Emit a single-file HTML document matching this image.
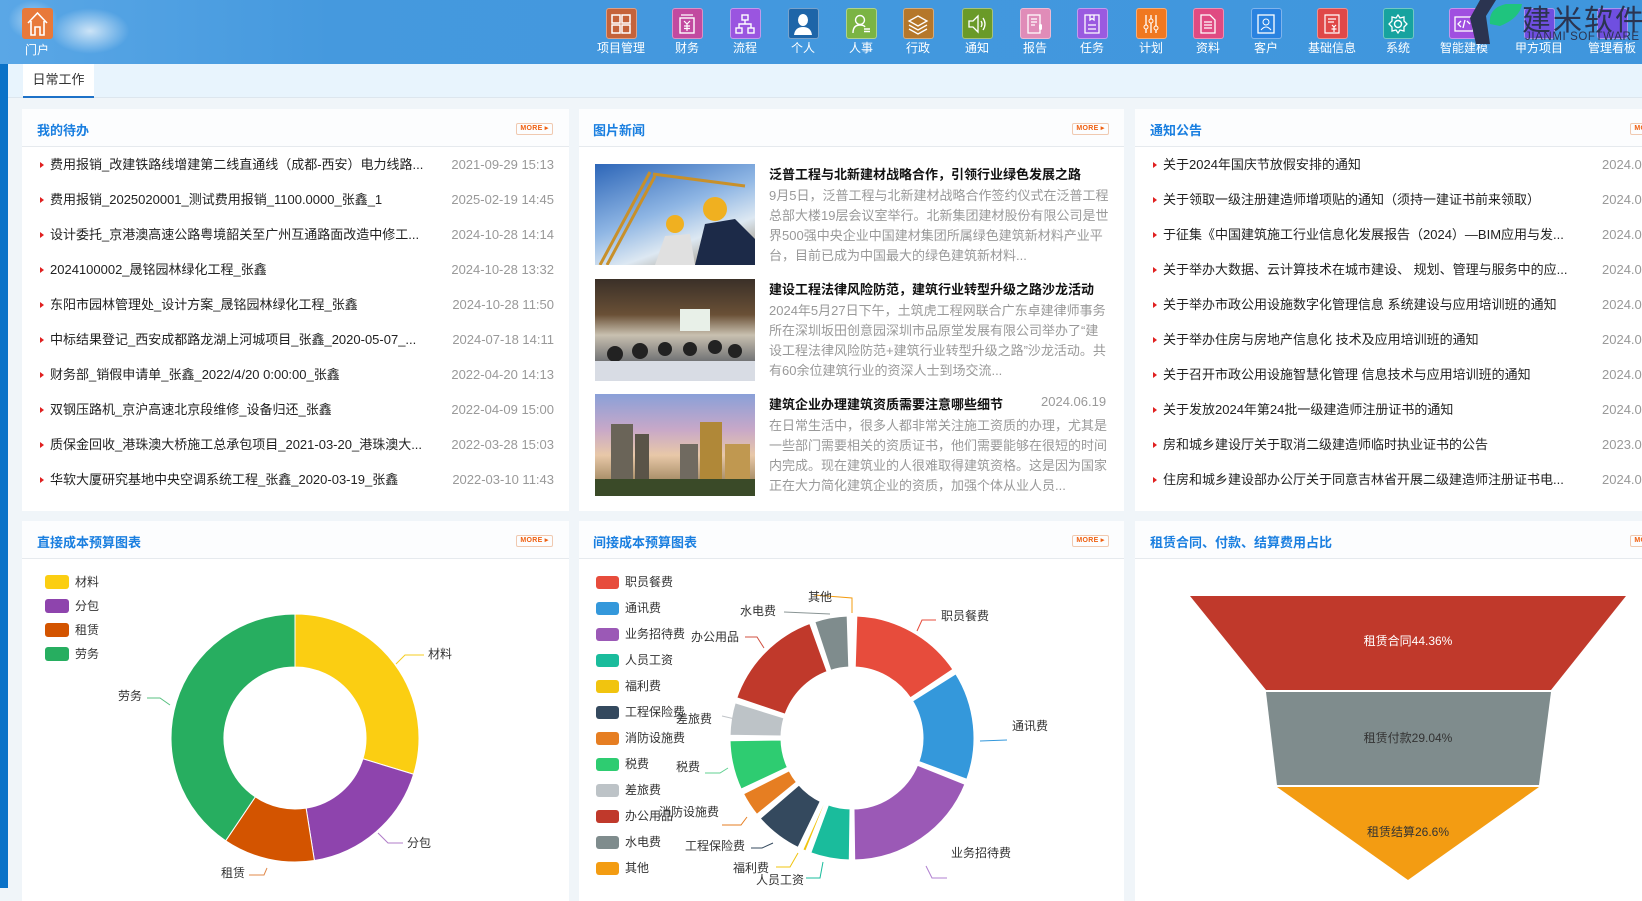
<!DOCTYPE html>
<html><head><meta charset="utf-8">
<style>
*{margin:0;padding:0;box-sizing:border-box}
body{width:1642px;height:888px;overflow:hidden;background:#f0f5f9;font-family:"Liberation Sans","Noto Sans CJK SC",sans-serif;position:relative;font-size:13px;color:#222}
.abs{position:absolute}
.top{left:0;top:0;width:1642px;height:64px;background:linear-gradient(90deg,#5aa7e6 0%,#4599de 20%,#3f96dd 100%)}
.nav{position:absolute;top:8px;width:60px;margin-left:-30px;text-align:center;color:#fff;font-size:12px}
.nav .ic{width:31px;height:31px;margin:0 auto;border-radius:3px;border:1px solid rgba(255,255,255,.4);display:flex;align-items:center;justify-content:center}
.nav .lb{margin-top:2px;line-height:14px;white-space:nowrap}
.panel{position:absolute;background:#fff}
.ph{position:absolute;left:0;right:0;top:0;height:38px;border-bottom:1px solid #e6eaee;background:#fcfdfe}
.pt{position:absolute;left:15px;top:11px;font-size:13px;font-weight:bold;color:#1a7fe0}
.more{position:absolute;top:14px;width:37px;height:12px;border:1px solid #f0c9b0;border-radius:2px;font-size:7px;font-weight:bold;color:#f06010;text-align:center;line-height:10px;letter-spacing:.3px}
.row{position:absolute;left:0;right:0;height:20px;line-height:20px;font-size:13px;white-space:nowrap}
.row .ar{position:absolute;left:18px;top:7px;width:0;height:0;border-left:4px solid #e02020;border-top:3px solid transparent;border-bottom:3px solid transparent}
.row .tx{position:absolute;left:28px;color:#222}
.row .dt{position:absolute;color:#999}
.ntitle{position:absolute;font-weight:bold;font-size:13px;color:#111;white-space:nowrap}
.nbody{position:absolute;font-size:13px;line-height:20px;color:#999;width:342px;height:80px;overflow:hidden}
.lg{position:absolute;font-size:12px;color:#333;white-space:nowrap;line-height:14px}
.sw{position:absolute;border-radius:3px}
.lab{position:absolute;font-size:12px;color:#333;white-space:nowrap;line-height:14px}
</style></head><body>

<div class="abs top"></div>
<div class="abs" style="left:50px;top:8px;width:80px;height:46px;border-radius:50%;background:radial-gradient(ellipse at center,rgba(255,255,255,.7),rgba(255,255,255,0) 70%)"></div>
<div class="abs" style="left:8px;top:0px;width:50px;height:40px;border-radius:50%;background:radial-gradient(ellipse at center,rgba(255,255,255,.5),rgba(255,255,255,0) 70%)"></div>
<div class="abs" style="left:22px;top:8px;width:31px;height:31px;background:#e8793a;border-radius:3px"></div>
<svg class="abs" style="left:22px;top:8px" width="31" height="31"><path d="M6 15 L15.5 5 L25 15 M9 13 V27 H13 V19 H18 V27 H22 V13" fill="none" stroke="#fff" stroke-width="1.6"/></svg>
<div class="abs" style="left:25px;top:41px;color:#fff;font-size:12px">门户</div>

<div class="nav" style="left:621px"><div class="ic" style="background:#c5633a"><svg width="22" height="22"><rect x="2" y="2" width="8" height="8" fill="none" stroke="#fff" stroke-width="1.5"/><rect x="12" y="2" width="8" height="8" fill="none" stroke="#fff" stroke-width="1.5"/><rect x="2" y="12" width="8" height="8" fill="none" stroke="#fff" stroke-width="1.5"/><rect x="12" y="12" width="8" height="8" fill="none" stroke="#fff" stroke-width="1.5"/></svg></div><div class="lb">项目管理</div></div>
<div class="nav" style="left:687px"><div class="ic" style="background:#c24aa0"><svg width="22" height="22"><rect x="4" y="5" width="14" height="15" fill="none" stroke="#fff" stroke-width="1.4"/><path d="M5 2H17 M8 8 L11 11 L14 8 M11 11V18 M8 13H14 M8 15.5H14" stroke="#fff" fill="none" stroke-width="1.2"/></svg></div><div class="lb">财务</div></div>
<div class="nav" style="left:745px"><div class="ic" style="background:#9a55e0"><svg width="22" height="22"><rect x="8" y="2" width="6" height="5" fill="none" stroke="#fff" stroke-width="1.4"/><rect x="2" y="15" width="6" height="5" fill="none" stroke="#fff" stroke-width="1.4"/><rect x="14" y="15" width="6" height="5" fill="none" stroke="#fff" stroke-width="1.4"/><path d="M11 7V11 M5 15V11H17V15" stroke="#fff" fill="none" stroke-width="1.4"/></svg></div><div class="lb">流程</div></div>
<div class="nav" style="left:803px"><div class="ic" style="background:#1e65a8"><svg width="22" height="24"><ellipse cx="11" cy="8" rx="5" ry="6" fill="#fff"/><path d="M2 23 Q3 15 11 15 Q19 15 20 23Z" fill="#fff"/></svg></div><div class="lb">个人</div></div>
<div class="nav" style="left:861px"><div class="ic" style="background:#7bb444"><svg width="22" height="22"><circle cx="10" cy="7" r="4.5" fill="none" stroke="#fff" stroke-width="1.4"/><path d="M3 20 Q3 12 10 12 Q14 12 15 14 M14 16H20 M14 18.5H20" stroke="#fff" fill="none" stroke-width="1.4"/></svg></div><div class="lb">人事</div></div>
<div class="nav" style="left:918px"><div class="ic" style="background:#b5772a"><svg width="22" height="22"><path d="M11 3 L20 8 L11 13 L2 8Z M2 12 L11 17 L20 12 M2 16 L11 21 L20 16" stroke="#fff" fill="none" stroke-width="1.3"/></svg></div><div class="lb">行政</div></div>
<div class="nav" style="left:977px"><div class="ic" style="background:#6a9a28"><svg width="22" height="22"><path d="M3 8H7L12 3V19L7 14H3Z M15 8 Q17 11 15 14 M17 5 Q21 11 17 17" stroke="#fff" fill="none" stroke-width="1.3"/></svg></div><div class="lb">通知</div></div>
<div class="nav" style="left:1035px"><div class="ic" style="background:#e08cb8"><svg width="22" height="22"><path d="M4 2H16V20H4Z M7 6H13 M7 9H13 M7 12H11" stroke="#fff" fill="none" stroke-width="1.3"/><rect x="15" y="11" width="3" height="6" rx="1.5" fill="#fff"/></svg></div><div class="lb">报告</div></div>
<div class="nav" style="left:1092px"><div class="ic" style="background:#9a5ae0"><svg width="22" height="22"><path d="M4 2H18V20H4Z M9 2V7L11 5.5L13 7V2 M7 12H15 M7 16H15" stroke="#fff" fill="none" stroke-width="1.3"/></svg></div><div class="lb">任务</div></div>
<div class="nav" style="left:1151px"><div class="ic" style="background:#f07820"><svg width="22" height="22"><path d="M6 2V20 M11 2V20 M16 2V20" stroke="#fff" stroke-width="1.3"/><circle cx="6" cy="14" r="2" fill="#f07820" stroke="#fff"/><circle cx="11" cy="8" r="2" fill="#f07820" stroke="#fff"/><circle cx="16" cy="15" r="2" fill="#f07820" stroke="#fff"/></svg></div><div class="lb">计划</div></div>
<div class="nav" style="left:1208px"><div class="ic" style="background:#e04a82"><svg width="22" height="22"><path d="M4 2H13L18 7V20H4Z M7 9H15 M7 12H15 M7 15H15" stroke="#fff" fill="none" stroke-width="1.3"/></svg></div><div class="lb">资料</div></div>
<div class="nav" style="left:1266px"><div class="ic" style="background:#2a82e0"><svg width="22" height="22"><rect x="3" y="2" width="16" height="18" fill="none" stroke="#fff" stroke-width="1.3"/><circle cx="11" cy="9" r="3" fill="none" stroke="#fff"/><path d="M6 17 Q11 11 16 17" stroke="#fff" fill="none"/></svg></div><div class="lb">客户</div></div>
<div class="nav" style="left:1332px"><div class="ic" style="background:#e04848"><svg width="22" height="22"><path d="M4 2H18V20H4Z M7 6H15 M7 9H13 M11 12L13 14L15 12 M13 14V19 M10.5 16H15.5" stroke="#fff" fill="none" stroke-width="1.2"/></svg></div><div class="lb">基础信息</div></div>
<div class="nav" style="left:1398px"><div class="ic" style="background:#17a39f"><svg width="22" height="22"><circle cx="11" cy="11" r="3.5" fill="none" stroke="#fff" stroke-width="1.4"/><path d="M11 2 L13 5 L17 4 L17 8 L20 11 L17 14 L17 18 L13 17 L11 20 L9 17 L5 18 L5 14 L2 11 L5 8 L5 4 L9 5Z" fill="none" stroke="#fff" stroke-width="1.3"/></svg></div><div class="lb">系统</div></div>
<div class="nav" style="left:1464px"><div class="ic" style="background:#a04fe0"><svg width="22" height="22"><rect x="2" y="4" width="18" height="14" fill="none" stroke="#fff" stroke-width="1.3"/><path d="M8 8L5 11L8 14 M14 8L17 11 M12 7L10 15" stroke="#fff" fill="none" stroke-width="1.3"/></svg></div><div class="lb">智能建模</div></div>
<div class="nav" style="left:1539px"><div class="ic" style="background:#6f4fe0"></div><div class="lb">甲方项目</div></div>
<div class="nav" style="left:1612px"><div class="ic" style="background:#6f4fe0"></div><div class="lb">管理看板</div></div>
<svg class="abs" style="left:1466px;top:0" width="62" height="46"><path d="M14 0 H30 L20 16 L24 44 H10 L4 18Z" fill="#2b3450"/><path d="M24 24 Q22 8 40 4 L56 4 Q54 18 34 26Z" fill="#1fc47e"/></svg>
<div class="abs" style="left:1522px;top:-3px;font-size:29px;color:#2b3450;letter-spacing:2px;white-space:nowrap">建米软件</div>
<div class="abs" style="left:1525px;top:31px;font-size:11.5px;color:#2b3450;letter-spacing:.6px;white-space:nowrap">JIANMI SOFTWARE</div>

<div class="abs" style="left:0;top:64px;width:8px;height:824px;background:#0a72c8"></div>
<div class="abs" style="left:8px;top:64px;width:1634px;height:34px;background:#e8f4fd;border-bottom:1px solid #dde6ee"></div>
<div class="abs" style="left:23px;top:64px;width:71px;height:34px;background:#fff;border-bottom:2px solid #1e72c8;text-align:center;line-height:32px;font-size:13px;color:#333">日常工作</div>

<div class="panel" style="left:22px;top:109px;width:547px;height:402px">
<div class="ph"><div class="pt">我的待办</div><div class="more" style="left:494px">MORE ▸</div></div>
</div>
<div id="p1"></div>

<div class="panel" style="left:579px;top:109px;width:545px;height:402px">
<div class="ph"><div class="pt" style="left:14px">图片新闻</div><div class="more" style="left:493px">MORE ▸</div></div>
<div class="abs" style="left:16px;top:55px;width:160px;height:101px;background:linear-gradient(160deg,#2d66b8 0%,#8fb6e4 45%,#dde8f2 70%,#8a7a60 100%)"></div>
<svg class="abs" style="left:16px;top:55px" width="160" height="101"><path d="M5 101 L55 8 M12 101 L60 12 M58 10 L150 22" stroke="#c8902a" stroke-width="3"/><circle cx="120" cy="45" r="12" fill="#f0b020"/><path d="M100 101 L110 60 L140 55 L160 75 L160 101Z" fill="#1c2a48"/><circle cx="80" cy="60" r="9" fill="#f0b020"/><path d="M60 101 L70 72 L95 70 L100 101Z" fill="#e0e0e0"/></svg>
<div class="abs" style="left:16px;top:170px;width:160px;height:102px;background:linear-gradient(180deg,#3a3028 0%,#6a5036 35%,#c8c0b0 55%,#303848 100%)"></div>
<svg class="abs" style="left:16px;top:170px" width="160" height="102"><rect x="85" y="30" width="30" height="22" fill="#e8f0e8"/><g fill="#222"><circle cx="20" cy="75" r="8"/><circle cx="45" cy="72" r="8"/><circle cx="70" cy="70" r="7"/><circle cx="95" cy="70" r="7"/><circle cx="120" cy="68" r="7"/><circle cx="140" cy="72" r="7"/></g><rect x="0" y="82" width="160" height="20" fill="#d8dce4"/></svg>
<div class="abs" style="left:16px;top:285px;width:160px;height:102px;background:linear-gradient(180deg,#8aa0d8 0%,#c8a8c8 35%,#e8c8a8 60%,#806a40 100%)"></div>
<svg class="abs" style="left:16px;top:285px" width="160" height="102"><rect x="16" y="30" width="22" height="72" fill="#6a6458"/><rect x="40" y="40" width="14" height="62" fill="#5a5448"/><rect x="105" y="28" width="22" height="74" fill="#b08838"/><rect x="85" y="50" width="18" height="52" fill="#706a60"/><rect x="130" y="50" width="25" height="52" fill="#c09850"/><rect x="0" y="85" width="160" height="17" fill="#3a4a28"/></svg>
<div class="ntitle" style="left:190px;top:55px">泛普工程与北新建材战略合作，引领行业绿色发展之路</div>
<div class="nbody" style="left:190px;top:77px">9月5日，泛普工程与北新建材战略合作签约仪式在泛普工程总部大楼19层会议室举行。北新集团建材股份有限公司是世界500强中央企业中国建材集团所属绿色建筑新材料产业平台，目前已成为中国最大的绿色建筑新材料...</div>
<div class="ntitle" style="left:190px;top:170px">建设工程法律风险防范，建筑行业转型升级之路沙龙活动</div>
<div class="nbody" style="left:190px;top:192px">2024年5月27日下午，土筑虎工程网联合广东卓建律师事务所在深圳坂田创意园深圳市品原堂发展有限公司举办了“建设工程法律风险防范+建筑行业转型升级之路”沙龙活动。共有60余位建筑行业的资深人士到场交流...</div>
<div class="ntitle" style="left:190px;top:285px">建筑企业办理建筑资质需要注意哪些细节</div>
<div class="abs" style="left:462px;top:285px;font-size:13px;color:#999">2024.06.19</div>
<div class="nbody" style="left:190px;top:307px">在日常生活中，很多人都非常关注施工资质的办理，尤其是一些部门需要相关的资质证书，他们需要能够在很短的时间内完成。现在建筑业的人很难取得建筑资格。这是因为国家正在大力简化建筑企业的资质，加强个体从业人员...</div>
</div>

<div class="panel" style="left:1135px;top:109px;width:520px;height:402px">
<div class="ph"><div class="pt" style="left:15px">通知公告</div><div class="more" style="left:495px">MORE ▸</div></div>
</div>
<div id="p3"></div>

<div class="panel" style="left:22px;top:521px;width:547px;height:380px">
<div class="ph"><div class="pt">直接成本预算图表</div><div class="more" style="left:494px">MORE ▸</div></div></div>
<div class="panel" style="left:579px;top:521px;width:545px;height:380px">
<div class="ph"><div class="pt" style="left:14px">间接成本预算图表</div><div class="more" style="left:493px">MORE ▸</div></div></div>
<div class="panel" style="left:1135px;top:521px;width:520px;height:380px">
<div class="ph"><div class="pt" style="left:15px">租赁合同、付款、结算费用占比</div><div class="more" style="left:495px">MORE ▸</div></div></div>

<svg class="abs" style="left:0;top:0" width="1642" height="888" id="charts">
<g id="c1"></g><g id="c2"></g>
<path d="M1190 596 L1626 596 L1551 690 L1266 690Z" fill="#c0392b"/>
<path d="M1266 692 L1551 692 L1539 785 L1277 785Z" fill="#7f8c8d"/>
<path d="M1277 787 L1539 787 L1408 880Z" fill="#f39c12"/>
<text x="1408" y="645" fill="#fff" font-size="12" text-anchor="middle" font-family="Liberation Sans,Noto Sans CJK SC,sans-serif">租赁合同44.36%</text>
<text x="1408" y="742" fill="#333" font-size="12" text-anchor="middle" font-family="Liberation Sans,Noto Sans CJK SC,sans-serif">租赁付款29.04%</text>
<text x="1408" y="836" fill="#333" font-size="12" text-anchor="middle" font-family="Liberation Sans,Noto Sans CJK SC,sans-serif">租赁结算26.6%</text>
<g fill="none" stroke-width="1">
<path d="M396 664 L405 655 L424 655" stroke="#f5cc20"/>
<path d="M378 833 L388 843 L403 843" stroke="#b07cc8"/>
<path d="M267 868 L264 875 L249 875" stroke="#e0884a"/>
<path d="M170 705 L160 698 L147 698" stroke="#58c080"/>
<path d="M814 595 L852 598 L852 613" stroke="#f39c12"/>
<path d="M784 612 L830 614" stroke="#8a9595"/>
<path d="M745 637 L757 637 L764 648" stroke="#d05040"/>
<path d="M917 631 L922 620 L936 620" stroke="#e74c3c"/>
<path d="M980 741 L1007 740" stroke="#3498db"/>
<path d="M926 866 L932 878 L947 878" stroke="#b080d0"/>
<path d="M735 719 L722 716" stroke="#c0c4c8"/>
<path d="M728 768 L720 773 L705 773" stroke="#60d090"/>
<path d="M747 817 L741 825 L722 825" stroke="#e67e22"/>
<path d="M773 843 L762 848 L751 848" stroke="#34495e"/>
<path d="M798 853 L790 867 L776 867" stroke="#f1c40f"/>
<path d="M823 862 L820 878 L806 878" stroke="#1abc9c"/>
</g>
</svg>

<div class="sw" style="left:45px;top:575px;width:24px;height:14px;background:#fbce12"></div><div class="lg" style="left:75px;top:575px">材料</div>
<div class="sw" style="left:45px;top:599px;width:24px;height:14px;background:#8e44ad"></div><div class="lg" style="left:75px;top:599px">分包</div>
<div class="sw" style="left:45px;top:623px;width:24px;height:14px;background:#d35400"></div><div class="lg" style="left:75px;top:623px">租赁</div>
<div class="sw" style="left:45px;top:647px;width:24px;height:14px;background:#27ae60"></div><div class="lg" style="left:75px;top:647px">劳务</div>
<div class="lab" style="left:428px;top:647px">材料</div>
<div class="lab" style="left:118px;top:689px">劳务</div>
<div class="lab" style="left:407px;top:836px">分包</div>
<div class="lab" style="left:221px;top:866px">租赁</div>

<div id="lg2"></div>
<div class="lab" style="left:808px;top:590px">其他</div>
<div class="lab" style="left:740px;top:604px">水电费</div>
<div class="lab" style="left:691px;top:630px">办公用品</div>
<div class="lab" style="left:941px;top:609px">职员餐费</div>
<div class="lab" style="left:1012px;top:719px">通讯费</div>
<div class="lab" style="left:676px;top:712px">差旅费</div>
<div class="lab" style="left:676px;top:760px">税费</div>
<div class="lab" style="left:659px;top:805px">消防设施费</div>
<div class="lab" style="left:685px;top:839px">工程保险费</div>
<div class="lab" style="left:733px;top:861px">福利费</div>
<div class="lab" style="left:756px;top:873px">人员工资</div>
<div class="lab" style="left:951px;top:846px">业务招待费</div>

<script>
var p1=[["费用报销_改建铁路线增建第二线直通线（成都-西安）电力线路...","2021-09-29 15:13"],["费用报销_2025020001_测试费用报销_1100.0000_张鑫_1","2025-02-19 14:45"],["设计委托_京港澳高速公路粤境韶关至广州互通路面改造中修工...","2024-10-28 14:14"],["2024100002_晟铭园林绿化工程_张鑫","2024-10-28 13:32"],["东阳市园林管理处_设计方案_晟铭园林绿化工程_张鑫","2024-10-28 11:50"],["中标结果登记_西安成都路龙湖上河城项目_张鑫_2020-05-07_...","2024-07-18 14:11"],["财务部_销假申请单_张鑫_2022/4/20 0:00:00_张鑫","2022-04-20 14:13"],["双钢压路机_京沪高速北京段维修_设备归还_张鑫","2022-04-09 15:00"],["质保金回收_港珠澳大桥施工总承包项目_2021-03-20_港珠澳大...","2022-03-28 15:03"],["华软大厦研究基地中央空调系统工程_张鑫_2020-03-19_张鑫","2022-03-10 11:43"]];
var p3=[["关于2024年国庆节放假安排的通知","2024.0"],["关于领取一级注册建造师增项贴的通知（须持一建证书前来领取）","2024.0"],["于征集《中国建筑施工行业信息化发展报告（2024）—BIM应用与发...","2024.0"],["关于举办大数据、云计算技术在城市建设、 规划、管理与服务中的应...","2024.0"],["关于举办市政公用设施数字化管理信息 系统建设与应用培训班的通知","2024.0"],["关于举办住房与房地产信息化 技术及应用培训班的通知","2024.0"],["关于召开市政公用设施智慧化管理 信息技术与应用培训班的通知","2024.0"],["关于发放2024年第24批一级建造师注册证书的通知","2024.0"],["房和城乡建设厅关于取消二级建造师临时执业证书的公告","2023.0"],["住房和城乡建设部办公厅关于同意吉林省开展二级建造师注册证书电...","2024.0"]];
var h="";
p1.forEach(function(r,i){var y=155+i*35;h+='<div class="row" style="left:22px;width:547px;top:'+y+'px"><span class="ar"></span><span class="tx">'+r[0]+'</span><span class="dt" style="right:15px">'+r[1]+'</span></div>';});
document.getElementById("p1").innerHTML=h;
h="";
p3.forEach(function(r,i){var y=155+i*35;h+='<div class="row" style="left:1135px;width:507px;top:'+y+'px"><span class="ar"></span><span class="tx">'+r[0]+'</span><span class="dt" style="left:467px">'+r[1]+'</span></div>';});
document.getElementById("p3").innerHTML=h;
var L2=[["职员餐费","#e74c3c"],["通讯费","#3498db"],["业务招待费","#9b59b6"],["人员工资","#1abc9c"],["福利费","#f1c40f"],["工程保险费","#34495e"],["消防设施费","#e67e22"],["税费","#2ecc71"],["差旅费","#bdc3c7"],["办公用品","#c0392b"],["水电费","#7f8c8d"],["其他","#f39c12"]];
h="";
L2.forEach(function(r,i){var y=576+i*26;h+='<div class="sw" style="left:596px;top:'+y+'px;width:23px;height:13px;background:'+r[1]+'"></div><div class="lg" style="left:625px;top:'+(y-1)+'px">'+r[0]+'</div>';});
document.getElementById("lg2").innerHTML=h;
function pt(cx,cy,r,a){a=a*Math.PI/180;return [cx+r*Math.sin(a),cy-r*Math.cos(a)];}
function arc(cx,cy,r0,r1,a0,a1){var l=(a1-a0)>180?1:0;var p=pt(cx,cy,r1,a0),q=pt(cx,cy,r1,a1),s=pt(cx,cy,r0,a1),t=pt(cx,cy,r0,a0);
return "M"+p[0]+" "+p[1]+" A"+r1+" "+r1+" 0 "+l+" 1 "+q[0]+" "+q[1]+" L"+s[0]+" "+s[1]+" A"+r0+" "+r0+" 0 "+l+" 0 "+t[0]+" "+t[1]+"Z";}
var ns="http://www.w3.org/2000/svg";
function add(g,d,c,sw,lj){var e=document.createElementNS(ns,"path");e.setAttribute("d",d);e.setAttribute("fill",c);e.setAttribute("stroke","#fff");e.setAttribute("stroke-width",sw);e.setAttribute("stroke-linejoin",lj||"miter");g.appendChild(e);}
var g1=document.getElementById("c1");
[[0,107,"#fbce12"],[107,171,"#8e44ad"],[171,214,"#d35400"],[214,360,"#27ae60"]].forEach(function(s){add(g1,arc(295,738,71,124,s[0],s[1]),s[2],1);});
var g2=document.getElementById("c2");
[[1,57,"#e74c3c"],[57,111,"#3498db"],[111,180,"#9b59b6"],[180,201,"#1abc9c"],[201,205,"#f1c40f"],[205,230,"#34495e"],[230,244,"#e67e22"],[244,270,"#2ecc71"],[270,288,"#bdc3c7"],[288,341,"#c0392b"],[341,359,"#7f8c8d"]].forEach(function(s){add(g2,arc(852,738,70,123,s[0]+0.8,s[1]-0.8),s[2],3,"round");});
</script>
</body></html>
